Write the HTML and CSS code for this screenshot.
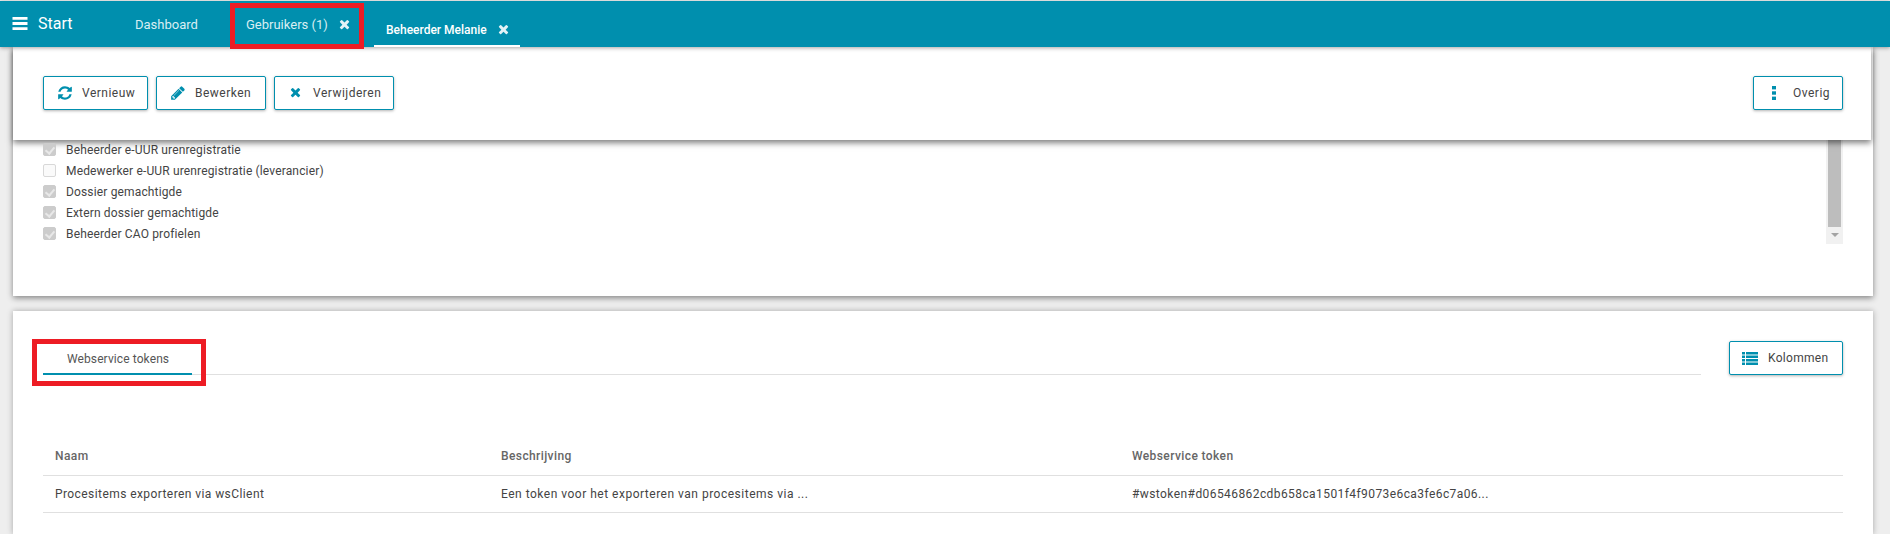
FILE: index.html
```html
<!DOCTYPE html>
<html lang="en">
<head>
    <meta charset="UTF-8">
    <title>Beheerder Melanie</title>
    <link rel="stylesheet" href="styles.css">
</head>
<body>
    <svg class="sprite" xmlns="http://www.w3.org/2000/svg">
        <symbol id="i-times" viewBox="0 0 1408 1792"><path d="M1298 1214q0 40-28 68l-136 136q-28 28-68 28t-68-28l-294-294-294 294q-28 28-68 28t-68-28l-136-136q-28-28-28-68t28-68l294-294-294-294q-28-28-28-68t28-68l136-136q28-28 68-28t68 28l294 294 294-294q28-28 68-28t68 28l136 136q28 28 28 68t-28 68l-294 294 294 294q28 28 28 68z"/></symbol>
        <symbol id="i-refresh" viewBox="0 0 1792 1792"><path d="M1639 1056q0 5-1 7-64 268-268 434.5t-478 166.5q-146 0-282.5-55t-243.5-157l-129 129q-19 19-45 19t-45-19-19-45v-448q0-26 19-45t45-19h448q26 0 45 19t19 45-19 45l-137 137q71 66 161 102t187 36q134 0 250-65t186-179q11-17 53-117 8-23 30-23h192q13 0 22.5 9.5t9.5 22.5zm25-800v448q0 26-19 45t-45 19h-448q-26 0-45-19t-19-45 19-45l138-138q-148-137-349-137-134 0-250 65t-186 179q-11 17-53 117-8 23-30 23h-199q-13 0-22.5-9.5t-9.5-22.5v-7q65-268 270-434.5t480-166.5q146 0 284 55.5t245 156.5l130-129q19-19 45-19t45 19 19 45z"/></symbol>
        <symbol id="i-pencil" viewBox="0 0 1792 1792"><path d="M491 1536l91-91-235-235-91 91v107h128v128h107zm523-928q0-22-22-22-10 0-17 7l-542 542q-7 7-7 17 0 22 22 22 10 0 17-7l542-542q7-7 7-17zm-54-192l416 416-832 832h-416v-416zm683 96q0 53-37 90l-166 166-416-416 166-165q36-38 90-38 53 0 91 38l235 234q37 39 37 91z"/></symbol>
        <symbol id="i-dots" viewBox="0 0 4 14"><rect x="0" y="0" width="4" height="3.4"/><rect x="0" y="5.3" width="4" height="3.4"/><rect x="0" y="10.6" width="4" height="3.4"/></symbol>
        <symbol id="i-list" viewBox="0 0 16 13"><path d="M0 0h3v2.6H0zM4 0h12v2.6H4zM0 3.4h3V6H0zM4 3.4h12V6H4zM0 6.9h3v2.6H0zM4 6.9h12v2.6H4zM0 10.4h3V13H0zM4 10.4h12V13H4z"/></symbol>
        <symbol id="i-bars" viewBox="0 0 15 13"><path d="M0 0h15v2.8H0zM0 5.1h15v2.8H0zM0 10.2h15V13H0z"/></symbol>
    </svg>

    <header class="topbar">
        <a class="start-link"><svg class="icon-bars"><use href="#i-bars"/></svg>Start</a>
        <a class="nav-tab nav-dashboard">Dashboard</a>
        <a class="nav-tab nav-users">
            Gebruikers (1)
            <svg class="icon-close"><use href="#i-times"/></svg>
            <span class="red-mark"></span>
        </a>
        <a class="nav-tab nav-active">
            Beheerder Melanie
            <svg class="icon-close"><use href="#i-times"/></svg>
        </a>
    </header>

    <main class="page">
        <section class="card card-roles">
            <div class="toolbar">
                <button class="btn btn-vernieuw"><svg class="btn-icon"><use href="#i-refresh"/></svg>Vernieuw</button>
                <button class="btn btn-bewerken"><svg class="btn-icon"><use href="#i-pencil"/></svg>Bewerken</button>
                <button class="btn btn-verwijderen"><svg class="btn-icon"><use href="#i-times"/></svg>Verwijderen</button>
                <button class="btn btn-overig"><svg class="btn-icon icon-dots"><use href="#i-dots"/></svg>Overig</button>
            </div>
            <div class="roles">
                <ul class="role-list">
                    <li class="role"><span class="check on"></span>Beheerder e-UUR urenregistratie</li>
                    <li class="role"><span class="check"></span>Medewerker e-UUR urenregistratie (leverancier)</li>
                    <li class="role"><span class="check on"></span>Dossier gemachtigde</li>
                    <li class="role"><span class="check on"></span>Extern dossier gemachtigde</li>
                    <li class="role"><span class="check on"></span>Beheerder CAO profielen</li>
                </ul>
                <div class="scrollbar">
                    <div class="scroll-thumb"></div>
                    <div class="scroll-arrow"></div>
                </div>
            </div>
        </section>

        <section class="card card-tokens">
            <div class="tab-row">
                <div class="tabs">
                    <div class="tab-active">
                        Webservice tokens
                        <span class="red-mark"></span>
                    </div>
                </div>
                <button class="btn btn-kolommen"><svg class="btn-icon icon-list"><use href="#i-list"/></svg>Kolommen</button>
            </div>
            <table class="grid">
                <thead>
                    <tr>
                        <th class="col-name">Naam</th>
                        <th class="col-desc">Beschrijving</th>
                        <th>Webservice token</th>
                    </tr>
                </thead>
                <tbody>
                    <tr>
                        <td>Procesitems exporteren via wsClient</td>
                        <td class="cell-desc">Een token voor het exporteren van procesitems via ...</td>
                        <td>#wstoken#d06546862cdb658ca1501f4f9073e6ca3fe6c7a06...</td>
                    </tr>
                </tbody>
            </table>
        </section>
    </main>
</body>
</html>
```

FILE: styles.css
```css
* {
    box-sizing: border-box;
}
html, body {
    height: 100%;
}
body {
    margin: 0;
    overflow: hidden;
    background: #eeeeee;
    font-family: Roboto, 'Liberation Sans', sans-serif;
    font-size: 12px;
    letter-spacing: 0.3px;
    color: #444444;
}
.sprite {
    display: none;
}

/* top bar */
.topbar {
    display: flex;
    align-items: stretch;
    height: 46px;
    margin-top: 1px;
    background: #008fae;
    color: #ffffff;
    box-shadow: 0 1px 4px rgba(0,0,0,0.35);
    position: relative;
    z-index: 2;
}
.start-link {
    display: flex;
    align-items: center;
    width: 135px;
    padding: 0 0 1px 12px;
    font-size: 16px;
    letter-spacing: 0;
}
.icon-bars {
    width: 16px;
    height: 13px;
    margin-right: 10px;
    fill: #ffffff;
}
.nav-tab {
    display: flex;
    align-items: center;
    position: relative;
    padding-top: 1px;
    color: #d9eef3;
    letter-spacing: 0;
    font-size: 13px;
}
.nav-dashboard {
    width: 111px;
}
.nav-users {
    width: 128px;
}
.nav-active {
    width: 146px;
    padding: 14px 0 0 12px;
    border-bottom: 2px solid #ffffff;
    color: #ffffff;
    font-size: 12px;
    font-weight: 500;
}
.icon-close {
    width: 11px;
    height: 14px;
    margin-left: 11px;
    fill: #e2f2f6;
}

/* red annotations from the screenshot */
.red-mark {
    position: absolute;
    border: 5px solid #ed1c24;
    pointer-events: none;
}
.nav-users .red-mark {
    left: -16px;
    top: 2px;
    width: 134px;
    height: 46px;
}
.tab-active .red-mark {
    left: -11px;
    top: -2px;
    width: 174px;
    height: 47px;
}

/* cards */
.page {
    padding: 0 17px 0 13px;
}
.card {
    background: #ffffff;
    box-shadow: 0 2px 6px rgba(0,0,0,0.45);
}
.card-roles {
    height: 249px;
}
.card-tokens {
    margin-top: 15px;
    height: 223px;
    padding: 30px 30px 0;
    box-shadow: 0 0 6px rgba(0,0,0,0.3);
}

/* action toolbar */
.toolbar {
    display: flex;
    gap: 8px;
    height: 93px;
    padding: 29px 28px 0 30px;
    margin-right: 2px;
    background: #ffffff;
    box-shadow: 0 3px 6px rgba(0,0,0,0.5);
    position: relative;
}
.btn {
    display: flex;
    align-items: center;
    height: 34px;
    padding: 0 0 0 13px;
    background: #ffffff;
    border: 1px solid #008fae;
    border-radius: 2px;
    box-shadow: 0 1px 3px rgba(0,0,0,0.3);
    color: #444444;
    font-family: inherit;
    font-size: 12px;
    letter-spacing: 0.5px;
}
.btn-icon {
    width: 16px;
    height: 16px;
    margin-right: 9px;
    fill: #008fae;
}
.btn-vernieuw {
    width: 105px;
}
.btn-bewerken {
    width: 110px;
}
.btn-verwijderen {
    width: 120px;
    padding-left: 15px;
}
.btn-verwijderen .btn-icon {
    width: 11px;
    height: 14px;
    margin-right: 12px;
}
.btn-overig {
    width: 90px;
    margin-left: auto;
    padding-left: 18px;
}
.icon-dots {
    width: 4px;
    height: 14px;
    margin-right: 17px;
}
.btn-kolommen {
    width: 114px;
    flex: none;
    padding-left: 12px;
    letter-spacing: 0.3px;
}
.icon-list {
    width: 16px;
    height: 13px;
    margin-right: 10px;
}

/* role list with its scrollbar */
.roles {
    display: flex;
    justify-content: space-between;
    height: 104px;
    padding: 0 30px;
    overflow: hidden;
    letter-spacing: 0.15px;
}
.role-list {
    list-style: none;
    margin: -1px 0 0;
    padding: 0;
}
.role {
    display: flex;
    align-items: center;
    height: 21px;
    color: #444444;
}
.check {
    position: relative;
    width: 13px;
    height: 13px;
    margin-right: 10px;
    border: 1px solid #d8d8d8;
    border-radius: 2px;
    background: #fafafa;
}
.check.on {
    background: #cccccc;
    border-color: #cccccc;
}
.check.on::after {
    content: "";
    position: absolute;
    left: 3px;
    top: 1px;
    width: 4px;
    height: 7px;
    border: solid #e8e8e8;
    border-width: 0 2px 2px 0;
    transform: rotate(40deg);
}
.scrollbar {
    display: flex;
    flex-direction: column;
    width: 17px;
    background: #f1f1f1;
}
.scroll-thumb {
    height: 87px;
    margin: 0 2px;
    background: #bdbdbd;
}
.scroll-arrow {
    width: 0;
    height: 0;
    margin: 6px auto 0;
    border: 4px solid transparent;
    border-top: 4px solid #a3a3a3;
    border-bottom: 0;
}

/* tokens */
.tab-row {
    display: flex;
    gap: 28px;
}
.tabs {
    flex: 1;
    height: 34px;
    border-bottom: 1px solid #e0e0e0;
}
.tab-active {
    position: relative;
    width: 149px;
    height: 34px;
    padding: 11px 0 0 24px;
    border-bottom: 2px solid #008fae;
    color: #555555;
    letter-spacing: 0.1px;
}
.grid {
    width: 100%;
    margin-top: 63px;
    border-collapse: collapse;
    table-layout: fixed;
}
.grid th,
.grid td {
    padding: 0 12px;
    text-align: left;
    border-bottom: 1px solid #e0e0e0;
}
.grid th {
    height: 37px;
    font-weight: 500;
    color: #666666;
    letter-spacing: 0.4px;
}
.grid td {
    height: 37px;
    color: #444444;
    letter-spacing: 0.42px;
}
.grid .cell-desc {
    letter-spacing: 0.5px;
}
.col-name {
    width: 446px;
}
.col-desc {
    width: 631px;
}
```
